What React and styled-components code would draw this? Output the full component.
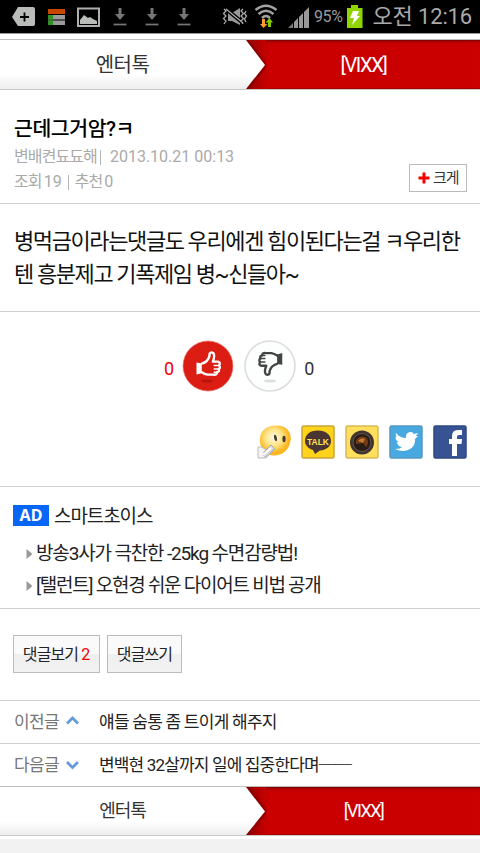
import React from "react";
import styled, { createGlobalStyle } from "styled-components";

const GlobalStyle = createGlobalStyle`
  * { box-sizing: border-box; }
  body { margin: 0; background: #f1f1f1; }
  ul { list-style: none; margin: 0; padding: 0; }
  h1, p { margin: 0; font-weight: 400; }
  svg { display: block; flex: none; }
  button { margin: 0; font: inherit; }
`;

const Screen = styled.div`
  width: 480px;
  height: 853px;
  overflow: hidden;
  display: flex;
  flex-direction: column;
  background: #f2f2f2;
  color: #222;
  font-family: Roboto, "Noto Sans CJK KR", sans-serif;
`;

const Label = styled.span`
  font-size: ${(p) => p.$size}px;
  letter-spacing: ${(p) => p.$gap || 0}px;
  color: ${(p) => p.$color || "inherit"};
  font-weight: ${(p) => p.$weight || 400};
  margin-left: ${(p) => p.$left || 0}px;
  line-height: 24px;
  height: 24px;
  white-space: pre;
`;

const StatusBar = styled.header`
  height: 33px;
  flex: none;
  display: flex;
  align-items: center;
  background: #000;
`;

const StatusIcons = styled.div`
  width: 310px;
  overflow: hidden;
`;

const BatterySlot = styled.div`
  margin-left: 4px;
`;

const TabBar = styled.nav`
  height: ${(p) => p.$height}px;
  flex: none;
  margin-top: ${(p) => p.$top || 0}px;
  display: flex;
  border-top: 1px solid #bdbdbd;
  border-bottom: 1px solid #c9c9c9;
  background: linear-gradient(#fff 70%, #eee);
`;

const Tab = styled.a`
  width: 246px;
  padding-right: 1px;
  display: flex;
  align-items: center;
  justify-content: center;
  color: #333;
`;

const ActiveTab = styled(Tab)`
  width: 214px;
  padding-right: 19px;
  color: #fff;
  background: #ca0000;
  box-shadow: inset 0 1px 0 #850000, inset 0 3px 3px -1px #980000, inset 0 -1px 0 #a80000;
`;

const Page = styled.main`
  background: #fff;
  flex: none;
  border-top: 1px solid #999;
  border-bottom: 3px solid #fff;
`;

const Section = styled.section`
  height: ${(p) => p.$height}px;
  padding: ${(p) => p.$pad};
  border-bottom: 1px solid #cfcfcf;
`;

const PostHead = styled(Section)`
  display: flex;
  justify-content: space-between;
  align-items: flex-end;
`;

const PostInfo = styled.div`
  display: flex;
  flex-direction: column;
  padding-bottom: 9px;
`;

const MetaLine = styled.div`
  display: flex;
  height: 25px;
  align-items: center;
  color: #aaa;
`;

const Title = styled.h1`
  font-size: 20.5px;
  line-height: 30px;
  font-weight: 500;
  letter-spacing: -0.45px;
  color: #000;
`;

const Divider = styled.i`
  width: 1px;
  height: 15px;
  background: #b5b5b5;
  margin: 2px ${(p) => p.$right}px 0 ${(p) => p.$left}px;
`;

const ZoomButton = styled.button`
  width: 58px;
  height: 28px;
  margin-bottom: 11px;
  padding: 0 0 0 8px;
  display: flex;
  align-items: center;
  gap: 3px;
  border: 1px solid #bbb;
  background: #fff;
  color: #333;
`;

const Body = styled.p`
  font-size: 22px;
  line-height: 33px;
  letter-spacing: -1.4px;
  color: #111;
  white-space: pre;
`;

const Votes = styled.div`
  display: flex;
  align-items: center;
  gap: 7px;
  height: 54px;
  padding-left: 164px;
`;

const VoteCount = styled(Label)`
  margin-top: 6px;
`;

const VotePair = styled.div`
  display: flex;
  gap: 8px;
`;

const Share = styled.div`
  display: flex;
  justify-content: flex-end;
  gap: 10px;
  margin-top: 32px;
`;

const AdTitle = styled.div`
  display: flex;
  align-items: center;
  gap: 5px;
  height: 26px;
  margin-bottom: 8px;
`;

const AdBadge = styled.span`
  width: 36px;
  height: 21px;
  margin-top: -4px;
  background: #0866f7;
  color: #fff;
  font: 700 16px/21px "Noto Sans", sans-serif;
  text-align: center;
`;

const AdItem = styled.li`
  display: flex;
  align-items: center;
  gap: 3px;
  height: 32px;
  padding-left: 13px;
`;

const Actions = styled(Section)`
  display: flex;
  gap: 7px;
`;

const ActionButton = styled.button`
  width: ${(p) => p.$width}px;
  height: 38px;
  display: flex;
  align-items: center;
  justify-content: center;
  gap: 3px;
  padding: 1px 0 0;
  border: 1px solid #bcbcbc;
  background: linear-gradient(#fafafa 50%, #efefef 51%, #f2f2f2);
  color: #222;
`;

const NeighborRow = styled.a`
  height: ${(p) => p.$height}px;
  display: flex;
  align-items: center;
  padding-left: 14px;
  border-bottom: ${(p) => (p.$last ? 0 : 1)}px solid #cfcfcf;
`;

const NeighborKind = styled.div`
  width: 85px;
  display: flex;
  align-items: center;
  gap: 7px;
  color: #777;
`;

function Ribbon({ id }) {
  return (
    <svg width="20" height="100%" viewBox="0 0 20 49" preserveAspectRatio="none">
      <defs>
        <linearGradient id={id + "r"}>
          <stop offset="0" stopColor="#8f0000" />
          <stop offset="1" stopColor="#c60000" />
        </linearGradient>
        <linearGradient id={id + "w"} x2="0" y2="1">
          <stop offset=".7" stopColor="#fff" />
          <stop offset="1" stopColor="#eee" />
        </linearGradient>
        <filter id={id + "b"} x="-50%" width="200%"><feGaussianBlur stdDeviation="1.5" /></filter>
      </defs>
      <path d="M0 0H20V49H0Z" fill={`url(#${id}r)`} />
      <path d="M0 0L20 25L0 49" fill="none" stroke="#750000" strokeWidth="2.5" filter={`url(#${id}b)`} />
      <path d="M0 0L19 25L0 49Z" fill={`url(#${id}w)`} />
    </svg>
  );
}

function Tabs({ id, size, gap, height, top, activeGap }) {
  return (
    <TabBar $height={height} $top={top}>
      <Tab><Label $size={size} $gap={gap}>엔터톡</Label></Tab>
      <Ribbon id={id} />
      <ActiveTab><Label $size={size} $gap={activeGap}>[VIXX]</Label></ActiveTab>
    </TabBar>
  );
}

function NotificationIcons() {
  return (
    <svg width="350" height="33" viewBox="0 0 350 33">
      <path d="M18 7H33Q35 7 35 9V24Q35 26 33 26H18L12 17Z" fill="#b9bcb9" />
      <path d="M20 17H29M24.5 12.5V21.5" stroke="#000" strokeWidth="1.8" />
      <path d="M48 9H65V14H48Z" fill="#c94500" />
      <path d="M48 15H65V19.5H48ZM48 20.5H65V25H48Z" fill="#9b9b9b" />
      <path d="M48 15H53V19.5H48ZM48 20.5H53V25H48Z" fill="#309126" />
      <path d="M78 8.5H99V26H78Z" fill="none" stroke="#aeb0ae" strokeWidth="2" />
      <path d="M80 24V20L84 15L88 18L90 17L93 19L97 21V24Z" fill="#b9bcb9" />
      {[120, 152, 184].map((x) => (
        <g key={x} transform={`translate(${x} 0)`}>
          <path d="M-1.5 8H1.5V14H5L0 20L-5 14H-1.5Z" fill="#777" />
          <path d="M-6.5 24.5H6.5" stroke="#777" strokeWidth="1.7" />
        </g>
      ))}
      <path d="M228 13H232L240 8V25L232 21H228Z" fill="#999" />
      <path d="M226 9L243 23" stroke="#000" strokeWidth="4" />
      <path d="M226 9L243 23M224 9L226 11L223.5 13.5L226 16L223.5 18.5L226 21L224 24M243 9L241 11L243.5 13.5L241 16L243.5 18.5L241 21L243 24M246 11L244.5 13.5L246.5 16L244.5 19L246 22" fill="none" stroke="#aaa" strokeWidth="1.3" />
      <g fill="none" stroke="#a2a2a2" strokeWidth="2.5">
        <path d="M255.5 10Q266 1.5 276.5 10" />
        <path d="M258.5 14Q266 7.5 273.5 14" />
        <path d="M262 18Q266 14 270 18" />
      </g>
      <path d="M262 19H265V24H267.5L263.5 28L260 24H262Z" fill="#ff9b30" />
      <path d="M268 27V22.5H265.5L269.5 18L273 22.5H271V27Z" fill="#83c900" />
      <path d="M288 28L293 23V28Z" fill="#777" />
      <path d="M294 28V22L298 18V28ZM299 28V17L303 13V28ZM304 28V12L309 7V28Z" fill="#999" />
    </svg>
  );
}

function Battery() {
  return (
    <svg width="16" height="33" viewBox="0 0 16 33">
      <path d="M4 5H11V8H15.5V28H0V8H4Z" fill="#91d500" />
      <path d="M6 11H12L10 16H13L5 25L7 18H3Z" fill="#fff" />
    </svg>
  );
}

/* A fist with an extended thumb, pointing up; the cuff is on the left. */
function Thumb({ color }) {
  return (
    <g fill="none" stroke={color} strokeLinejoin="round" strokeLinecap="round">
      <path
        d="M-7 -2C-3 -3 0 -6 1 -10V-12Q2 -14.5 5 -13Q7 -10 4.500 -4H10Q13 -3 11 0Q13 2 10.5 4Q12 6 9 7Q9 10 5 9.5H-1Q-4 9 -7 7"
        strokeWidth="2.5"
      />
      <path d="M6 0H11M6 3.7H10.5M6 7H9" strokeWidth="1.6" />
      <path d="M-12.5 -3L-7 -2V8L-12.5 9.5Z" fill={color} stroke="none" />
    </g>
  );
}

function VoteIcon({ up }) {
  return (
    <svg width="54" height="54" viewBox="-27 -27 54 54">
      <circle r="25" fill={up ? "#dc1d13" : "#fdffff"} stroke={up ? "#e57870" : "#ddd"} strokeWidth={up ? 0.7 : 1.6} />
      <ellipse cy="15" cx={up ? -1 : 0} rx="6" ry="1.6" fill={up ? "#b91510" : "#ddd"} />
      <g transform={up ? "translate(.5 -.5) scale(.96)" : "translate(.5 -4) rotate(180) scale(.94)"}>
        <Thumb color={up ? "#fff" : "#444"} />
      </g>
    </svg>
  );
}

function ShareTile({ fill, edge, children }) {
  return (
    <svg width="34" height="34" viewBox="0 0 34 34">
      <rect x="1" y="1" width="32" height="32" rx="1.5" fill={fill} stroke={edge} strokeWidth="1.5" />
      {children}
    </svg>
  );
}

function Smiley() {
  return (
    <svg width="34" height="34" viewBox="0 0 34 34">
      <defs>
        <radialGradient id="face" cx=".45" cy=".4">
          <stop offset="0" stopColor="#fffbe8" />
          <stop offset=".55" stopColor="#ffe486" />
          <stop offset="1" stopColor="#fbb51e" />
        </radialGradient>
      </defs>
      <path d="M3 13C4 4 12 0 20 .5C30 .5 35 8 33.5 16C32 26 24 31 16 30.5C8 30 2 22 3 13Z" fill="url(#face)" />
      <ellipse cx="18.500" cy="13" rx="1.4" ry="3.2" fill="#443c32" transform="rotate(-12 18.5 13)" />
      <ellipse cx="27" cy="14" rx="1.6" ry="3.2" fill="#443c32" />
      <path d="M1 22H5L9 25L14 20L18 24L9 33H1Z" fill="#f4f4f4" stroke="#bbb" />
      <path d="M5 29L14 20L17.5 23.5L8.5 32Z" fill="#ddd" stroke="#999" strokeWidth=".8" />
      <path d="M5 28L7 29.5L14 23" fill="none" stroke="#fff" strokeWidth="2" />
    </svg>
  );
}

function ShareIcons() {
  return (
    <Share>
      <Smiley />
      <ShareTile fill="#ffd21b" edge="#c9a63a">
        <path d="M17 5.5C8 5.5 4 10.5 4 16C4 20.5 8 24 12 25L14 29L19 25.5C26 25 30 21 30 16C30 10 25 5.5 17 5.500Z" fill="#4b3533" />
        <text x="17" y="19.5" textAnchor="middle" textLength="22" lengthAdjust="spacingAndGlyphs" fill="#ffe34d" fontFamily="Liberation Sans, sans-serif" fontWeight="700" fontSize="9.5">TALK</text>
      </ShareTile>
      <ShareTile fill="#ffdf5c" edge="#d9b957">
        <circle cx="17" cy="17.5" r="12" fill="#403431" />
        <circle cx="17" cy="17.5" r="9" fill="#2a1c17" stroke="#65564c" strokeWidth="1" />
        <path d="M11 19C10 13 16 10 20 12C24 14 24 19 21 22L18 18Z" fill="#713b15" />
        <path d="M13 16Q16 12 20 14L18 18Z" fill="#c47931" />
      </ShareTile>
      <ShareTile fill="#48a9e0" edge="#5599c1">
        <path d="M7 8C10 12 14 13 17 13C16 7 23 5 25 9L29 8L27 11L29 11L26 14C27 24 16 29 6 24C10 24 12 23 13 22C10 22 8 19 8 17H10C7 16 6 13 7 11L9 12C7 11 6 9 7 8Z" fill="#fff" />
      </ShareTile>
      <ShareTile fill="#385393" edge="#2d4981">
        <path d="M19 31V19H16V14H19V11Q19 5 25 5H29V10H26Q24 10 24 12V14H29L28.5 19H24V31Z" fill="#fff" />
      </ShareTile>
    </Share>
  );
}

function Bullet() {
  return <svg width="7" height="12" viewBox="0 0 7 12"><path d="M.5 1L6.5 6L.5 11Z" fill="#999" /></svg>;
}

function Chevron({ up }) {
  return (
    <svg width="13" height="12" viewBox="0 0 13 12">
      <path d={up ? "M1 7.500L6.5 2L12 7.500" : "M1 3L6.5 8.5L12 3"} fill="none" stroke="#659bdc" strokeWidth="2.8" />
    </svg>
  );
}

const ads = [
  { text: "방송3사가 극찬한 -25kg 수면감량법!", gap: -1.15 },
  { text: "[탤런트] 오현경 쉬운 다이어트 비법 공개", gap: -1.25 },
];

export default function App() {
  return (
    <Screen>
      <GlobalStyle />
      <StatusBar>
        <StatusIcons><NotificationIcons /></StatusIcons>
        <Label $left={4} $size={16} $gap={-0.4} $color="#999">95%</Label>
        <BatterySlot><Battery /></BatterySlot>
        <Label $left={10} $size={22} $gap={-0.15} $color="#aaa">오전 12:16</Label>
      </StatusBar>
      <Page>
        <Tabs id="top" top={5} height={51} size={20} gap={-0.6} activeGap={-1.3} />
        <PostHead $height={114} $pad="0 13px 0 14px">
          <PostInfo>
            <Title>근데그거암?ㅋ</Title>
            <MetaLine>
              <Label $size={16} $gap={-0.9}>변배켠됴됴해</Label>
              <Divider $left={3} $right={9} />
              <Label $size={16}>2013.10.21 00:13</Label>
            </MetaLine>
            <MetaLine>
              <Label $size={16} $gap={-0.9}>조회</Label>
              <Label $size={16} $left={2}>19</Label>
              <Divider $left={6} $right={6} />
              <Label $size={16} $gap={-0.9}>추천</Label>
              <Label $size={16} $left={2}>0</Label>
            </MetaLine>
          </PostInfo>
          <ZoomButton>
            <svg width="12" height="12" viewBox="0 0 12 12"><path d="M0.500 6H11.500M6 0.500V11.500" stroke="#f00000" strokeWidth="3" /></svg>
            <Label $size={15} $gap={-1}>크게</Label>
          </ZoomButton>
        </PostHead>
        <Section $height={108} $pad="21px 14px">
          <Body>{"병먹금이라는댓글도 우리에겐 힘이된다는걸 ㅋ우리한\n텐 흥분제고 기폭제임 병~신들아~"}</Body>
        </Section>
        <Section $height={175} $pad="27px 13px 0 0">
          <Votes>
            <VoteCount $size={18} $color="#e00">0</VoteCount>
            <VotePair><VoteIcon up /><VoteIcon /></VotePair>
            <VoteCount $size={18} $color="#333">0</VoteCount>
          </Votes>
          <ShareIcons />
        </Section>
        <Section $height={122} $pad="17px 13px 0">
          <AdTitle><AdBadge>AD</AdBadge><Label $size={19} $gap={-1.1}>스마트초이스</Label></AdTitle>
          <ul>
            {ads.map((ad) => (
              <AdItem key={ad.text}><Bullet /><Label $size={19} $gap={ad.gap}>{ad.text}</Label></AdItem>
            ))}
          </ul>
        </Section>
        <Actions $height={92} $pad="26px 13px">
          <ActionButton $width={87}>
            <Label $size={16} $gap={-0.9}>댓글보기</Label><Label $size={16} $color="#e00">2</Label>
          </ActionButton>
          <ActionButton $width={75}><Label $size={16} $gap={-0.9}>댓글쓰기</Label></ActionButton>
        </Actions>
        <NeighborRow $height={43}>
          <NeighborKind><Label $size={17} $gap={-0.7}>이전글</Label><Chevron up /></NeighborKind>
          <Label $size={17} $gap={-0.75}>얘들 숨통 좀 트이게 해주지</Label>
        </NeighborRow>
        <NeighborRow $height={42} $last>
          <NeighborKind><Label $size={17} $gap={-0.7}>다음글</Label><Chevron /></NeighborKind>
          <Label $size={17} $gap={-0.85}>변백현 32살까지 일에 집중한다며──</Label>
        </NeighborRow>
        <Tabs id="bottom" height={50} size={18} gap={-1} activeGap={-1.5} />
      </Page>
    </Screen>
  );
}
